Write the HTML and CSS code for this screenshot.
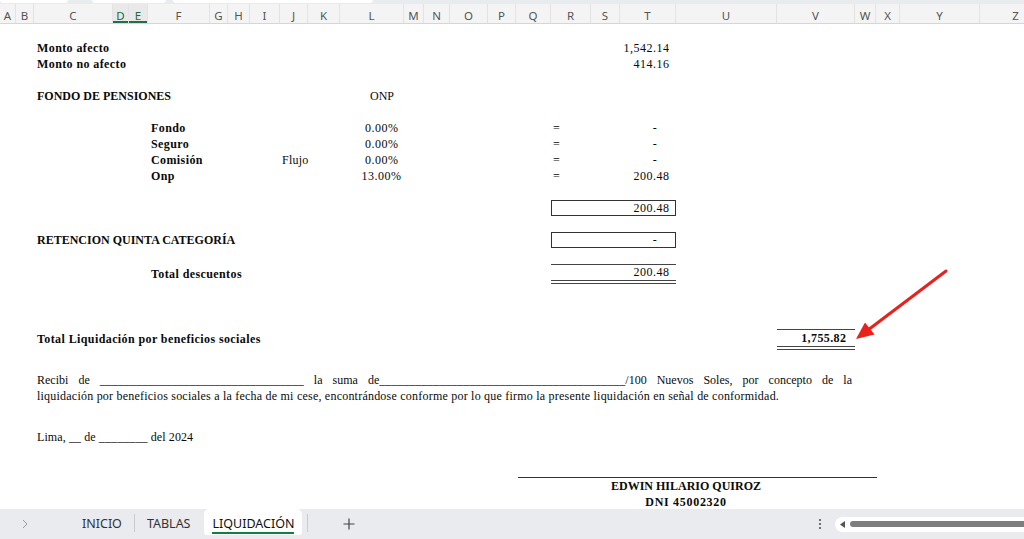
FILE: index.html
```html
<!DOCTYPE html>
<html lang="es">
<head>
<meta charset="utf-8">
<title>LIQUIDACIÓN</title>
<link rel="stylesheet" href="styles.css">
</head>
<body>
<div class="topstrip">
  <div class="blk blk1"></div>
  <div class="blk blk2"></div>
  <div class="blk blk3"></div>
</div>
<div class="colhead">
  <div>A</div><div>B</div><div>C</div><div class="sel">D</div><div class="sel">E</div><div>F</div><div>G</div><div>H</div><div>I</div><div>J</div><div>K</div><div>L</div><div>M</div><div>N</div><div>O</div><div>P</div><div>Q</div><div>R</div><div>S</div><div>T</div><div>U</div><div>V</div><div>W</div><div>X</div><div>Y</div><div>Z</div>
</div>
<div class="sheet">
  <div class="row"></div>
  <div class="row"><div class="c-lbl b">Monto afecto</div><div class="t-amt n">1,542.14</div></div>
  <div class="row"><div class="c-lbl b">Monto no afecto</div><div class="t-amt n">414.16</div></div>
  <div class="row"></div>
  <div class="row"><div class="c-lbl b caps">FONDO DE PENSIONES</div><div class="l-onp caps">ONP</div></div>
  <div class="row"></div>
  <div class="row"><div class="f-lbl b">Fondo</div><div class="l-pct n">0.00%</div><div class="r-eq">=</div><div class="t-amt t-dash">-</div></div>
  <div class="row"><div class="f-lbl b">Seguro</div><div class="l-pct n">0.00%</div><div class="r-eq">=</div><div class="t-amt t-dash">-</div></div>
  <div class="row"><div class="f-lbl b">Comisión</div><div class="j-lbl">Flujo</div><div class="l-pct n">0.00%</div><div class="r-eq">=</div><div class="t-amt t-dash">-</div></div>
  <div class="row"><div class="f-lbl b">Onp</div><div class="l-pct n wide">13.00%</div><div class="r-eq">=</div><div class="t-amt n">200.48</div></div>
  <div class="row"></div>
  <div class="row"><div class="box n">200.48</div></div>
  <div class="row"></div>
  <div class="row"><div class="c-lbl b caps">RETENCION QUINTA CATEGORÍA</div><div class="box box-dash">-</div></div>
  <div class="row"></div>
  <div class="row h20"><div class="f-lbl b">Total descuentos</div><div class="subtotal n">200.48</div></div>
  <div class="sp44"></div>
  <div class="row h22"><div class="c-lbl b">Total Liquidación por beneficios sociales</div><div class="grand bn">1,755.82</div></div>
  <div class="sp22"></div>
  <div class="para">
    <div class="just">Recibi de __________________________________ la suma de_________________________________________/100 Nuevos Soles, por concepto de la</div>
    <div class="line">liquidación por beneficios sociales a la fecha de mi cese, encontrándose conforme por lo que firmo la presente liquidación en señal de conformidad.</div>
  </div>
  <div class="sp25"></div>
  <div class="lima">Lima, __ de ________ del 2024</div>
  <div class="sp32"></div>
  <div class="sig-line"></div>
  <div class="sig-name caps">EDWIN HILARIO QUIROZ</div>
  <div class="sig-name dni">DNI 45002320</div>
</div>
<div class="tabbar">
  <div class="nav">
    <svg width="6" height="10" viewBox="0 0 6 10"><path d="M1 1 L5 5 L1 9" fill="none" stroke="#9a9a9a" stroke-width="1"/></svg>
  </div>
  <div class="tab"><span>INICIO</span></div>
  <div class="sep"></div>
  <div class="tab"><span>TABLAS</span></div>
  <div class="tab active"><span>LIQUIDACIÓN</span></div>
  <div class="sep sep-after"></div>
  <div class="add">
    <svg width="12" height="12" viewBox="0 0 12 12"><path d="M6 0.5 V11.5 M0.5 6 H11.5" stroke="#444" stroke-width="1.2"/></svg>
  </div>
  <div class="tb-right">
    <svg class="dots" width="4" height="12" viewBox="0 0 4 12"><circle cx="2" cy="2" r="1.1" fill="#555"/><circle cx="2" cy="6" r="1.1" fill="#555"/><circle cx="2" cy="10" r="1.1" fill="#555"/></svg>
    <div class="track">
      <svg class="tri" width="5" height="7" viewBox="0 0 5 7"><path d="M5 0 L0 3.5 L5 7 Z" fill="#555"/></svg>
      <div class="thumb"></div>
    </div>
  </div>
</div>
<svg class="arrow" width="1024" height="539" viewBox="0 0 1024 539">
  <line x1="946" y1="271" x2="868" y2="330" stroke="#e8211a" stroke-width="3" stroke-linecap="round"/>
  <polygon points="856,339 874.5,334.5 865,322.5" fill="#e8211a"/>
</svg>
</body>
</html>
```
FILE: styles.css
```css
:root {
  --cols: 16px 18px 79px 16px 19px 62px 18px 22px 30px 28px 32px 64px 20px 26px 38px 28px 35px 40px 29px 56px 101px 78px 21px 24px 80px 72px;
}
html, body {
  margin: 0;
  padding: 0;
}
body {
  width: 1024px;
  height: 539px;
  overflow: hidden;
  display: flex;
  flex-direction: column;
  background: #fff;
  font-family: "Liberation Serif", "Times New Roman", serif;
  position: relative;
}
.topstrip {
  flex: none;
  height: 4px;
  background: #e9ecef;
  display: flex;
}
.topstrip .blk {
  height: 3px;
  background: #fff;
  border-radius: 0 0 3px 3px;
}
.blk1 { width: 68px; }
.blk2 { width: 74px; margin-left: 24px; }
.blk3 { width: 200px; margin-left: 7px; }

.colhead {
  flex: none;
  display: grid;
  grid-template-columns: var(--cols);
  height: 19px;
  border-bottom: 1px solid #d6d6d6;
  background: #f4f4f4;
  font-family: "Noto Sans", "Liberation Sans", sans-serif;
  font-size: 11.5px;
  color: #555;
  overflow: hidden;
}
.colhead div {
  display: flex;
  align-items: center;
  justify-content: center;
  padding-top: 3px;
  box-sizing: border-box;
  border-right: 1px solid #e3e3e3;
}
.colhead .sel {
  color: #1d6b3f;
  background: #e9e9e9;
  box-shadow: inset 0 -2px 0 #1e7145;
}

.sheet {
  flex: 1;
  overflow: hidden;
  font-size: 12px;
  color: #0a0a0a;
  letter-spacing: 0.22px;
}
.row {
  display: grid;
  grid-template-columns: var(--cols);
  height: 16px;
  line-height: 16px;
  align-items: center;
  white-space: nowrap;
}
.row.h20 { height: 20px; }
.row.h22 { height: 22px; }
.b { font-weight: bold; letter-spacing: 0.4px; }
.caps { letter-spacing: 0; }
.n { letter-spacing: 0.5px; }
.bn { letter-spacing: 0.4px; }
.c-lbl { grid-column: 3 / 12; padding-left: 3px; }
.f-lbl { grid-column: 6 / 10; padding-left: 3px; }
.j-lbl { grid-column: 10 / 12; padding-left: 2px; }
.l-onp { grid-column: 12 / 14; text-align: center; }
.l-pct { grid-column: 12 / 13; text-align: right; padding-right: 5.5px; }
.l-pct.wide { padding-right: 2.5px; }
.r-eq { grid-column: 18 / 19; padding-left: 2px; }
.t-amt { grid-column: 19 / 21; text-align: right; padding-right: 6.5px; }
.t-amt.t-dash { padding-right: 19px; }
.box {
  grid-column: 18 / 21;
  height: 16px;
  box-sizing: border-box;
  border: 1px solid #333;
  line-height: 14px;
  text-align: right;
  padding-right: 5.5px;
}
.box.box-dash { padding-right: 18px; }
.subtotal {
  grid-column: 18 / 21;
  border-top: 1px solid #444;
  border-bottom: 4px double #444;
  line-height: 15px;
  text-align: right;
  padding-right: 6.5px;
}
.grand {
  grid-column: 22 / 23;
  margin-top: 1px;
  border-top: 1px solid #444;
  border-bottom: 4px double #444;
  line-height: 16px;
  text-align: right;
  padding-right: 8.6px;
  font-weight: bold;
}
.sp44 { height: 44px; }
.sp22 { height: 22px; }
.sp25 { height: 25px; }
.sp32 { height: 32px; }
.para {
  margin-left: 37px;
  width: 815px;
  line-height: 16px;
}
.just {
  text-align: justify;
  text-align-last: justify;
  white-space: nowrap;
  letter-spacing: 0;
}
.line { white-space: nowrap; }
.lima {
  margin-left: 37px;
  line-height: 16px;
  letter-spacing: 0.1px;
}
.sig-line {
  margin-left: 518px;
  width: 359px;
  border-top: 1px solid #333;
}
.sig-name {
  margin-left: 518px;
  width: 336px;
  text-align: center;
  font-weight: bold;
  line-height: 16px;
}
.sig-name.dni { letter-spacing: 0.7px; }

.tabbar {
  flex: none;
  height: 30px;
  background: #e9ebef;
  display: flex;
  align-items: stretch;
  font-family: "Noto Sans", "Liberation Sans", sans-serif;
  font-size: 12.5px;
  color: #333;
}
.nav {
  width: 70px;
  box-sizing: border-box;
  padding-left: 22px;
  display: flex;
  align-items: center;
}
.tab {
  padding: 7px 12px 0;
  box-sizing: border-box;
}
.tab span {
  display: block;
  line-height: 16px;
  border-bottom: 2px solid transparent;
}
.tab.active {
  background: #fff;
  color: #111;
  margin: 0 2px 4px 2px;
  padding: 7px 8px 0;
  border-radius: 5px 5px 3px 3px;
}
.tab.active span {
  border-bottom-color: #137e43;
}
.sep {
  width: 1px;
  background: #c9cbce;
  margin: 5px 0 7px;
}
.sep-after { margin-left: 3px; }
.add {
  margin-left: 35px;
  display: flex;
  align-items: center;
}
.tb-right {
  margin-left: auto;
  display: flex;
  align-items: center;
}
.dots { display: block; }
.track {
  margin-left: 13px;
  width: 189px;
  height: 15px;
  background: #fff;
  border-radius: 8px 0 0 8px;
  display: flex;
  align-items: center;
}
.tri {
  display: block;
  margin-left: 5px;
}
.thumb {
  margin-left: 5px;
  flex: 1;
  height: 6px;
  background: #7d7d7d;
  border-radius: 3px 0 0 3px;
}
.arrow {
  position: absolute;
  left: 0;
  top: 0;
  pointer-events: none;
}
```
